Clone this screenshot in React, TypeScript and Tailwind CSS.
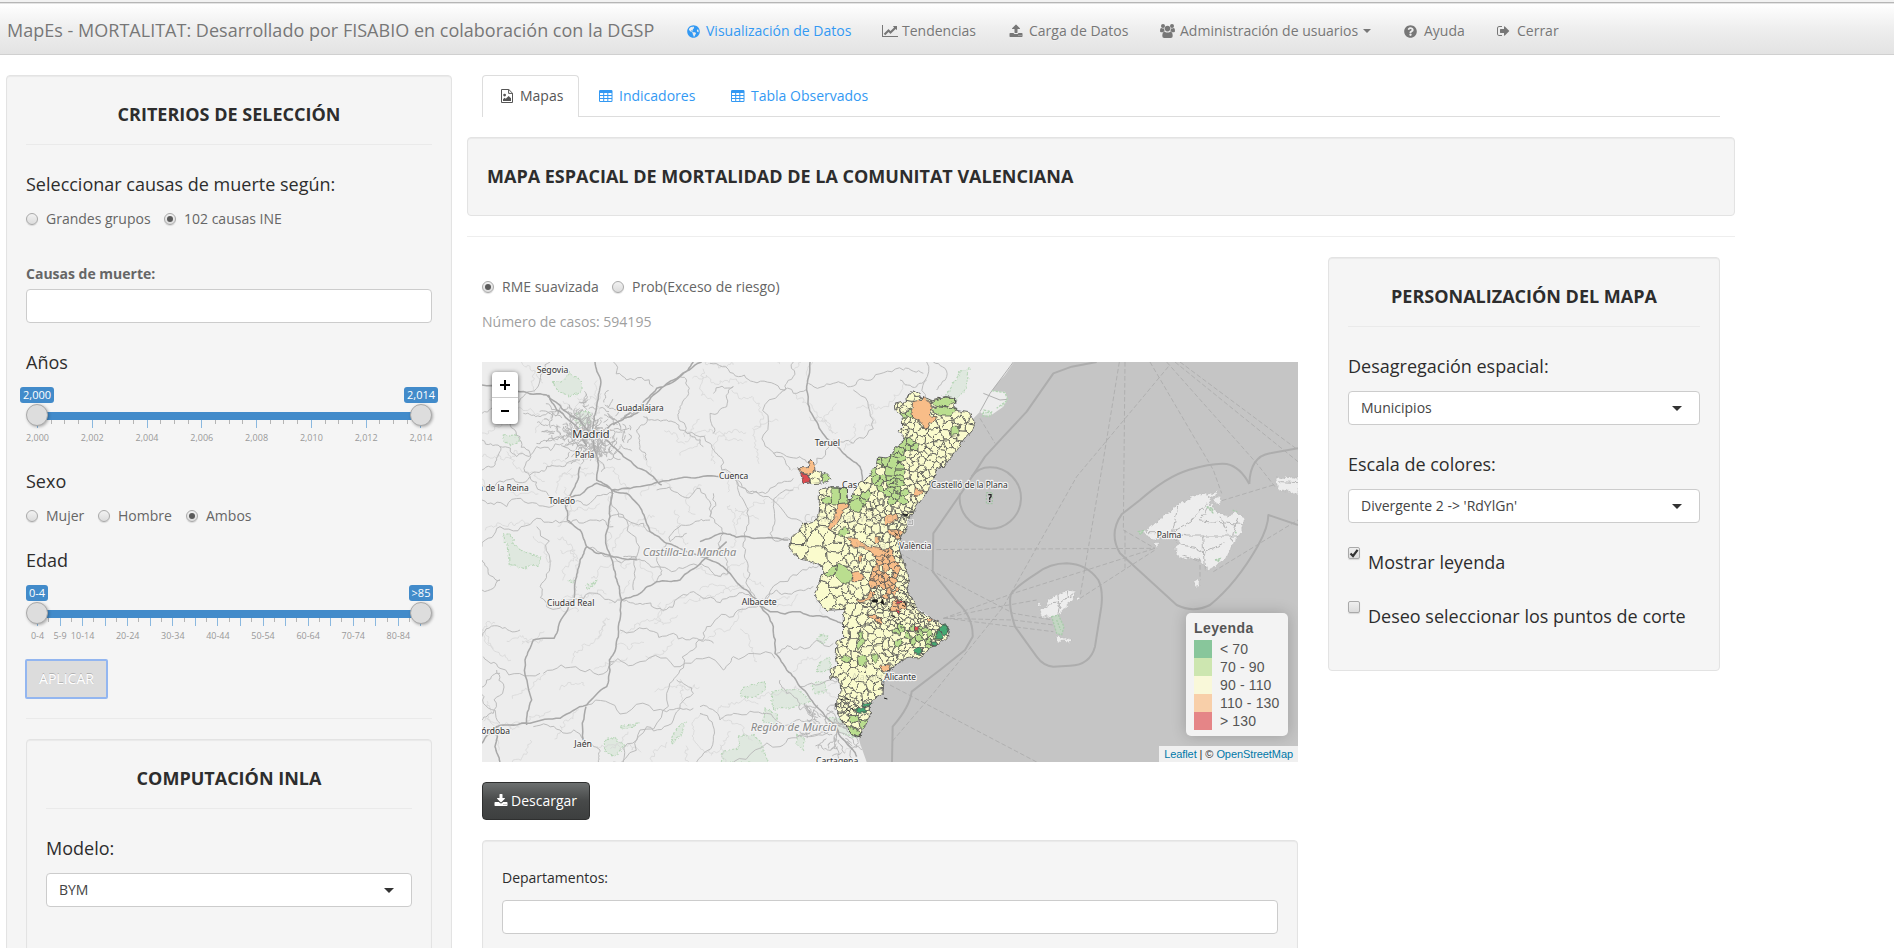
import React from "react";
import { FaGlobeAmericas, FaQuestionCircle } from "react-icons/fa";

/* ---------- icons ---------- */

const DOTS_LOW = "M1344 1472q0-26-19-45t-45-19-45 19-19 45 19 45 45 19 45-19 19-45zm256 0q0-26-19-45t-45-19-45 19-19 45 19 45 45 19 45-19 19-45z";

function LineChartIcon() {
  return (
    <svg viewBox="0 0 2048 1792" className="h-[14px] w-4" fill="currentColor">
      <path d="M2048 1536v128h-2048v-1536h128v1408h1920zm-128-1248v435q0 21-19.5 29.5t-35.5-7.5l-121-121-633 633q-10 10-23 10t-23-10l-233-233-416 416-192-192 585-585q10-10 23-10t23 10l233 233 464-464-121-121q-16-16-7.5-35.5t29.5-19.5h435q14 0 23 9t9 23z" />
    </svg>
  );
}

function UploadIcon() {
  return (
    <svg viewBox="0 0 1792 1792" className="size-[14px]" fill="currentColor" fillRule="evenodd">
      <path d={DOTS_LOW + "M1728 1248v320q0 40-28 68t-68 28h-1472q-40 0-68-28t-28-68v-320q0-40 28-68t68-28h427q21 56 70.5 92t110.5 36h256q61 0 110.5-36t70.5-92h427q40 0 68 28t28 68zm-325-648q-17 40-59 40h-256v448q0 26-19 45t-45 19h-256q-26 0-45-19t-19-45v-448h-256q-42 0-59-40-17-39 14-69l448-448q18-19 45-19t45 19l448 448q31 30 14 69z"} />
    </svg>
  );
}

function DownloadIcon() {
  return (
    <svg viewBox="0 0 1792 1792" className="size-[14px]" fill="currentColor" fillRule="evenodd">
      <path d="M1344 1344q0-26-19-45t-45-19-45 19-19 45 19 45 45 19 45-19 19-45zm256 0q0-26-19-45t-45-19-45 19-19 45 19 45 45 19 45-19 19-45zm128-224v320q0 40-28 68t-68 28h-1472q-40 0-68-28t-28-68v-320q0-40 28-68t68-28h465l135 136q58 56 136 56t136-56l136-136h464q40 0 68 28t28 68zm-325-569q17 41-14 70l-448 448q-18 19-45 19t-45-19l-448-448q-31-29-14-70 17-39 59-39h256v-448q0-26 19-45t45-19h256q26 0 45 19t19 45v448h256q42 0 59 39z" />
    </svg>
  );
}

function SignOutIcon() {
  return (
    <svg viewBox="0 0 1792 1792" className="size-[14px]" fill="currentColor">
      <path d="M640 1440q0 4 1 20t.5 26.5-3 23.5-10 19.5-20.5 6.5h-320q-119 0-203.5-84.5t-84.5-203.5v-704q0-119 84.5-203.5t203.5-84.5h320q13 0 22.5 9.5t9.5 22.5q0 4 1 20t.5 26.5-3 23.5-10 19.5-20.5 6.5h-320q-66 0-113 47t-47 113v704q0 66 47 113t113 47h312l11.5 1 11.5 3 8 5.5 7 9 2 13.5zm928-544q0 26-19 45l-544 544q-19 19-45 19t-45-19-19-45v-288h-448q-26 0-45-19t-19-45v-384q0-26 19-45t45-19h448v-288q0-26 19-45t45-19 45 19l544 544q19 19 19 45z" />
    </svg>
  );
}

function TableIcon() {
  return (
    <svg viewBox="0 0 14 14" className="size-[14px]" fill="currentColor" fillRule="evenodd">
      <path d="M1.2 1H12.3Q13.5 1 13.5 2.2V11.8Q13.5 13 12.3 13H1.2Q0 13 0 11.8V2.2Q0 1 1.2 1ZM1 4H4.2V6H1ZM5.2 4H8.3V6H5.2ZM9.3 4H12.5V6H9.3ZM1 7H4.2V9H1ZM5.2 7H8.3V9H5.2ZM9.3 7H12.5V9H9.3ZM1 10H4.2V12H1ZM5.2 10H8.3V12H5.2ZM9.3 10H12.5V12H9.3Z" />
    </svg>
  );
}

function FileImageIcon() {
  return (
    <svg viewBox="0 0 12 14" className="h-[14px] w-3">
      <path d="M.5.5H7.8L11.5 4.2V13.5H.5ZM7.6.5V4.4H11.5" fill="none" stroke="currentColor" />
      <circle cx="3.6" cy="6.1" r="1.4" fill="currentColor" />
      <path d="M2 12V10.2L3.6 8.7L4.8 9.8L7.6 6.9L10 9.3V12Z" fill="currentColor" />
    </svg>
  );
}

function UsersIcon() {
  return (
    <svg viewBox="0 0 15 14" className="h-[14px] w-[15px]" fill="currentColor">
      <circle cx="3" cy="2" r="2" />
      <circle cx="12" cy="2" r="2" />
      <path d="M4.1 4.4Q3.9 6.4 5 7.3Q3.7 7.4 3 8.2H1.2Q0 8.2 0 7Q0 4.1 1.1 4.1Q2.4 4.9 4.1 4.4ZM10.9 4.4Q11.1 6.4 10 7.3Q11.3 7.4 12 8.2H13.8Q15 8.2 15 7Q15 4.1 13.9 4.1Q12.6 4.9 10.9 4.4Z" />
      <circle cx="7.5" cy="4.6" r="2.8" />
      <path d="M4.7 7.7Q7.5 9.5 10.3 7.7Q12.7 7.8 12.7 12Q12.7 13.9 10.8 13.9H4.2Q2.3 13.9 2.3 12Q2.3 7.8 4.7 7.7Z" />
    </svg>
  );
}

/* ---------- form parts ---------- */

function Radio({ label, checked, className }: { label: string; checked?: boolean; className: string }) {
  return (
    <label className={"flex h-5 items-center text-sm leading-5 text-[#666] " + className}>
      <span className="mr-2 flex size-3 shrink-0 items-center justify-center rounded-full border border-[#a9a9a9] bg-linear-to-b from-[#f2f2f2] to-[#dcdcdc] shadow-[0_1px_1px_rgba(0,0,0,0.12)]">
        {checked && <span className="size-1.5 rounded-full bg-[#5a5a5a]" />}
      </span>
      <span className="whitespace-nowrap">{label}</span>
    </label>
  );
}

function Check({ label, checked }: { label: string; checked?: boolean }) {
  return (
    <label className="flex items-start">
      <span className="mr-2 flex size-3 shrink-0 items-center justify-center rounded-[2px] border border-[#a9a9a9] bg-linear-to-b from-[#efefef] to-[#dcdcdc] shadow-[0_1px_1px_rgba(0,0,0,0.12)]">
        {checked && (
          <svg viewBox="0 0 10 10" className="size-[10px]" fill="none" stroke="#333" strokeWidth="2.2">
            <path d="M1.5 5.5L4 8L8.6 1.8" />
          </svg>
        )}
      </span>
      <span className="mt-[5px] text-lg leading-5 whitespace-nowrap text-[#2d2d2d]">{label}</span>
    </label>
  );
}

function Select({ value, className }: { value: string; className: string }) {
  return (
    <div className={"flex h-[34px] items-center justify-between rounded border border-[#ccc] bg-white pr-[17px] pl-3 text-sm text-[#444] " + className}>
      <span>{value}</span>
      <span className="border-x-[5px] border-t-[5px] border-x-transparent border-t-[#333]" />
    </div>
  );
}

function Title({ children, className = "" }: { children: React.ReactNode; className?: string }) {
  return <h4 className={"text-lg leading-5 font-bold whitespace-nowrap text-[#2d2d2d] " + className}>{children}</h4>;
}

function Caption({ children, className }: { children: React.ReactNode; className: string }) {
  return <h4 className={"text-lg leading-5 whitespace-nowrap text-[#2d2d2d] " + className}>{children}</h4>;
}

const WELL = "rounded border border-[#e3e3e3] bg-[#f5f5f5] shadow-[inset_0_1px_1px_rgba(0,0,0,0.05)] ";

type Tick = { x: number; big: boolean; label?: string };

function RangeSlider({ from, to, ticks, className }: { from: string; to: string; ticks: Tick[]; className: string }) {
  return (
    <div className={"relative h-[57px] w-[406px] " + className}>
      <svg className="absolute inset-0 overflow-visible" width="406" height="57" viewBox="0 0 406 57">
        {ticks.map((t, i) => (
          <g key={i}>
            <rect x={Math.round(t.x)} y="33" width="1" height={t.big ? 8 : 4} fill={t.big ? "#8ab8df" : "#b5b5b5"} />
            {t.label && (
              <text x={t.x + 0.5} y="54" textAnchor="middle" fontSize="9" fill="#999" className="font-['Open_Sans',sans-serif]">
                {t.label}
              </text>
            )}
          </g>
        ))}
        <rect x="11" y="25" width="384" height="8" fill="#428bca" />
      </svg>
      <div className="absolute inset-x-0 top-0 flex justify-between text-[11px] leading-4 whitespace-nowrap text-white">
        <div className="flex w-[22px] justify-center"><span className="shrink-0 rounded-[3px] bg-[#428bca] px-[3px]">{from}</span></div>
        <div className="flex w-[22px] justify-center"><span className="shrink-0 rounded-[3px] bg-[#428bca] px-[3px]">{to}</span></div>
      </div>
      <div className="absolute inset-x-0 top-[17px] flex justify-between">
        <span className="size-[22px] rounded-full border border-[#aaa] bg-[#ddd] shadow-[1px_1px_3px_rgba(0,0,0,0.3)]" />
        <span className="size-[22px] rounded-full border border-[#aaa] bg-[#ddd] shadow-[1px_1px_3px_rgba(0,0,0,0.3)]" />
      </div>
    </div>
  );
}

const YEAR_TICKS: Tick[] = Array.from({ length: 29 }, (_, i) => ({
  x: 11 + (i * 383.4) / 28,
  big: i % 4 === 0,
  label: i % 4 === 0 ? `2,0${String((i / 4) * 2).padStart(2, "0")}` : undefined,
}));

const AGE_LABELS: Record<number, string> = {
  0: "0-4", 1: "5-9", 2: "10-14", 4: "20-24", 6: "30-34", 8: "40-44", 10: "50-54", 12: "60-64", 14: "70-74", 16: "80-84",
};
const AGE_TICKS: Tick[] = Array.from({ length: 35 }, (_, i) => ({
  x: 11 + (i * 383.4) / 34,
  big: i % 2 === 0,
  label: i % 2 === 0 ? AGE_LABELS[i / 2] : undefined,
}));

/* ---------- map ---------- */

type Pt = [number, number];

function makeRandom(seed: number) {
  let s = seed;
  return () => {
    s = (s * 1664525 + 1013904223) % 4294967296;
    return s / 4294967296;
  };
}

const pts = (s: string): Pt[] => s.trim().split(/\s+/).map((p) => p.split(",").map(Number) as Pt);
const toD = (p: Pt[]) => "M" + p.map(([x, y]) => `${x.toFixed(1)} ${y.toFixed(1)}`).join("L");

/* Subdivides a line and displaces its midpoints so that it winds like a road. */
function winding(line: Pt[], rnd: () => number, amount = 0.16): Pt[] {
  let cur = line;
  for (let pass = 0; pass < 3; pass++) {
    const next: Pt[] = [cur[0]];
    for (let i = 1; i < cur.length; i++) {
      const [ax, ay] = cur[i - 1];
      const [bx, by] = cur[i];
      const k = (rnd() - 0.5) * amount;
      if (Math.hypot(bx - ax, by - ay) > 9) next.push([(ax + bx) / 2 - (by - ay) * k, (ay + by) / 2 + (bx - ax) * k]);
      next.push([bx, by]);
    }
    cur = next;
  }
  return cur;
}

const MAJOR = [
  "6,75 120,95 200,105 250,150 300,180 330,220",
  "400,195 470,160 520,105 590,55 665,6",
  "380,205 430,178 480,140 530,85 600,50 640,6",
  "345,6 362,60 355,110 342,170 335,220",
  "340,240 350,360 395,390 470,380 560,362 620,352 720,350",
  "380,240 430,290 520,350 545,375",
  "395,390 440,400 485,450 510,515 560,550 620,575 690,600 750,640 800,690 838,725",
  "660,545 730,520 770,532 830,535 925,540",
  "395,390 390,470 380,560 400,620 418,680 425,720 415,800 408,860 388,900 390,930 380,980 320,1035 240,1075 150,1090 50,1100",
  "245,420 300,405 350,370 390,385",
  "300,320 285,380 250,430",
  "255,430 262,480 300,510 320,560 350,580 400,590 470,600",
  "320,560 300,600 290,650 282,720 235,800 222,835 160,840 135,900 155,1020 140,1095",
  "425,720 480,700 530,665 600,660 665,605 740,545",
  "838,735 880,800 885,880 920,930 960,980 1010,1040 1060,1090 1100,1150 1130,1190",
  "842,738 870,755 960,755 1040,770 1085,790",
  "990,6 980,90 1000,170 1040,235 1090,280 1140,320 1150,370",
  "6,1150 50,1100 45,1160 60,1206",
  "310,1140 318,1040",
  "205,105 230,150 300,210 320,260",
];

const MINOR = [
  "980,88 900,88 820,65 760,40 690,10",
  "985,70 1060,70 1120,78 1180,55 1270,30 1330,40",
  "6,375 80,360 150,350 150,280 120,230 90,190",
  "150,350 180,390 220,410",
  "150,345 200,320 260,310 300,300",
  "760,350 800,390 870,385 940,355",
  "760,350 720,290 690,250 600,210 560,180 490,170",
  "765,360 790,420 800,500 795,580 810,640 825,710",
  "700,400 690,470 730,520 740,600 745,640",
  "530,390 600,405 660,385 690,470",
  "620,520 570,545 640,490 690,480",
  "600,50 628,85 600,140 605,185 640,230 670,260",
  "500,170 470,210 480,260 500,300",
  "430,590 470,600 530,620 620,620 700,640 745,640",
  "320,560 380,590 470,590 460,690",
  "350,700 425,720 480,730 540,745 600,710 680,715 760,710 830,720",
  "200,740 270,720 350,700",
  "838,725 900,665 980,630 1020,615",
  "850,720 890,690 960,690 1000,680",
  "838,735 760,770 680,800 640,870 600,930 560,1000 480,1110 430,1206",
  "885,895 760,890 730,930 600,920 480,905 390,905",
  "320,1035 420,1062 560,1055 640,1045",
  "660,1040 720,1080 760,1060 860,1060 950,1080 1010,1080",
  "590,960 640,1000 580,1080 500,1100 400,1206",
  "310,1140 240,1110 160,1100",
  "310,1140 360,1170 355,1206",
  "60,940 20,960 10,1030 60,1090",
  "6,560 60,500 160,482 250,485 330,480 400,500",
  "6,420 80,440 170,430 240,420",
  "120,810 60,800 6,830",
  "420,810 500,805 580,820 660,840 700,850",
  "180,940 60,925 10,890",
  "190,940 300,930 400,910",
  "6,690 60,660 20,620 6,600",
  "200,740 180,680 210,600 170,500",
  "940,6 920,70 900,100 850,225 900,290 930,330",
  "700,100 760,80 740,140 690,160 700,220",
  "1040,235 1000,320 960,290 880,280",
  "1060,240 1120,250 1180,180 1120,90",
  "930,540 870,520 880,440 940,390",
  "770,360 850,410 900,440 980,500",
  "1090,1000 1040,1050 1080,1100 1120,1110",
  "1010,1040 960,1050 920,1000 900,960",
  "1060,1090 980,1130 900,1160 760,1206",
  "1070,1100 1120,1140 1180,1170",
  "960,980 1050,960 1080,960",
  "890,880 960,860 1060,850",
  "650,1206 700,1130 660,1060",
  "6,1080 40,1060 70,990 50,930",
  "6,160 60,130 130,110 180,60 210,6",
  "130,160 180,170 250,160",
  "60,260 110,290 170,260 250,250",
  "6,240 60,260 50,300 6,330",
  "400,6 440,60 520,80",
  "560,550 540,620 530,665",
  "390,470 460,490 510,515",
  "470,590 440,480 400,400",
  "400,400 330,430 260,440",
  "1340,6 1335,120 1290,150",
  "1370,90 1400,50 1360,6",
  "1260,60 1310,80 1340,60",
];

function buildBackRoads() {
  const rnd = makeRandom(77);
  const out: string[] = [];
  for (let i = 0; i < 110; i++) {
    let x = 10 + rnd() * 1180;
    let y = 10 + rnd() * 1190;
    let a = rnd() * 6.28;
    const line: Pt[] = [[x, y]];
    const n = 3 + Math.floor(rnd() * 5);
    for (let k = 0; k < n; k++) {
      a += (rnd() - 0.5) * 1.3;
      x += Math.cos(a) * 28;
      y += Math.sin(a) * 22;
      line.push([x, y]);
    }
    out.push(toD(winding(line, rnd, 0.9)));
  }
  return out.join("");
}

/* Dense street webs round the larger cities. */
function buildCityWeb(cx: number, cy: number, rx: number, ry: number, n: number, seed: number) {
  const rnd = makeRandom(seed);
  const out: string[] = [];
  for (let i = 0; i < n; i++) {
    const a = rnd() * 6.28;
    const r = Math.pow(rnd(), 0.8);
    const x = cx + Math.cos(a) * rx * r;
    const y = cy + Math.sin(a) * ry * r;
    const b = rnd() < 0.5 ? a : a + 1.57;
    const l = 14 + rnd() * 38;
    out.push(toD(winding([[x, y], [x + Math.cos(b) * l, y + Math.sin(b) * l]], rnd, 0.6)));
  }
  return out.join("");
}

const roadRandom = makeRandom(5);
const MAJOR_D = MAJOR.map((s) => toD(winding(pts(s), roadRandom))).join("");
const MINOR_D = MINOR.map((s) => toD(winding(pts(s), roadRandom, 0.5))).join("");
const BACK_D = buildBackRoads();
const MADRID_D = buildCityWeb(325, 210, 130, 90, 130, 9) + buildCityWeb(325, 245, 50, 40, 70, 14);
const MURCIA_D = buildCityWeb(1060, 1110, 90, 90, 60, 21);

const OUTLINE = pts(
  "428,57 445,68 447,78 465,82 478,88 500,82 525,77 550,80 552,92 545,105 556,118 575,122 595,125 612,150 600,180 578,205 560,232 545,250 530,268 520,285 500,290 490,315 478,330 472,358 450,388 435,410 420,430 410,462 400,485 385,515 385,540 395,570 408,605 412,630 405,655 425,685 437,710 460,730 485,745 520,760 538,785 520,805 500,820 480,825 460,850 440,860 420,860 400,865 370,885 345,905 335,935 333,972 305,985 298,1000 298,1030 285,1060 270,1075 267,1097 245,1090 225,1065 205,1040 193,1010 195,985 210,960 205,920 180,922 177,895 200,880 195,855 198,815 218,800 217,735 222,715 165,718 130,675 140,640 155,610 155,585 105,567 90,565 62,542 57,528 62,498 85,475 100,458 130,450 140,435 145,390 145,355 180,347 225,350 230,390 244,382 247,360 262,343 285,325 303,300 315,285 320,255 345,258 368,245 370,230 400,207 395,195 380,180 395,170 393,130 372,118 370,100 390,95 410,97 408,80 415,65",
);

function inside([x, y]: Pt, poly: Pt[]) {
  let hit = false;
  for (let i = 0, j = poly.length - 1; i < poly.length; j = i++) {
    const [xi, yi] = poly[i];
    const [xj, yj] = poly[j];
    if (yi > y !== yj > y && x < ((xj - xi) * (y - yi)) / (yj - yi) + xi) hit = !hit;
  }
  return hit;
}

function spacing(x: number, y: number) {
  if (x < 200 && y > 490 && y < 710) return 58;
  if (Math.hypot(x - 320, y - 695) < 35) return 8;
  if (x > 365 && y > 400 && y < 560) return 9;
  if (x > 330 && y >= 640 && y < 770) return 10;
  if (x > 300 && y >= 540 && y < 770) return 13;
  if (x > 345 && y >= 770) return 14;
  if (y > 975 && y < 1030 && x > 200) return 11;
  if (y < 330 && x > 430) return 20;
  if (x > 300 && y < 460) return 16;
  return 25;
}

const YELLOW = "#fafbcd";
const GREEN = "#bade8f";
const ORANGE = "#f8bd88";
const DARK = "#45a872";
const RED = "#dc4b50";

const ZONES: [number, number, number, number, string, number][] = [
  [345, 560, 30, 25, ORANGE, 0.9],
  [345, 615, 38, 40, ORANGE, 0.85],
  [335, 660, 52, 26, ORANGE, 0.65],
  [378, 700, 26, 25, ORANGE, 0.7],
  [325, 740, 30, 14, ORANGE, 0.6],
  [380, 492, 12, 14, ORANGE, 0.6],
  [405, 655, 20, 12, ORANGE, 0.3],
  [475, 745, 14, 8, ORANGE, 0.6],
  [350, 300, 54, 68, GREEN, 0.85],
  [405, 232, 42, 28, GREEN, 0.9],
  [378, 380, 40, 20, GREEN, 0.65],
  [272, 385, 22, 22, GREEN, 0.75],
  [400, 795, 50, 45, GREEN, 0.45],
  [470, 800, 40, 35, GREEN, 0.4],
  [408, 140, 20, 40, GREEN, 0.6],
  [270, 1045, 30, 30, GREEN, 0.4],
  [490, 315, 10, 12, GREEN, 0.9],
];

/* Splits the region into Voronoi cells by clipping a box against the bisectors. */
function buildCells() {
  const rnd = makeRandom(2014);
  const seeds: Pt[] = [];
  for (let i = 0; i < 7000; i++) {
    const p: Pt = [50 + rnd() * 570, 50 + rnd() * 1050];
    if (!inside(p, OUTLINE)) continue;
    const r = spacing(p[0], p[1]) * (0.62 + rnd() * 0.6);
    if (seeds.every((q) => Math.hypot(p[0] - q[0], p[1] - q[1]) > r)) seeds.push(p);
  }
  return seeds.map((s) => {
    let cell: Pt[] = [[s[0] - 90, s[1] - 90], [s[0] + 90, s[1] - 90], [s[0] + 90, s[1] + 90], [s[0] - 90, s[1] + 90]];
    for (const q of seeds) {
      if (q === s || Math.hypot(q[0] - s[0], q[1] - s[1]) > 180) continue;
      const nx = q[0] - s[0];
      const ny = q[1] - s[1];
      const c = (q[0] * q[0] + q[1] * q[1] - s[0] * s[0] - s[1] * s[1]) / 2;
      const next: Pt[] = [];
      for (let i = 0; i < cell.length; i++) {
        const a = cell[i];
        const b = cell[(i + 1) % cell.length];
        const da = a[0] * nx + a[1] * ny - c;
        const db = b[0] * nx + b[1] * ny - c;
        if (da <= 0) next.push(a);
        if (da < 0 !== db < 0) {
          const t = da / (da - db);
          next.push([a[0] + (b[0] - a[0]) * t, a[1] + (b[1] - a[1]) * t]);
        }
      }
      cell = next;
    }
    let fill = YELLOW;
    for (const [zx, zy, zrx, zry, color, chance] of ZONES) {
      if (((s[0] - zx) / zrx) ** 2 + ((s[1] - zy) / zry) ** 2 < 1 && rnd() < chance) {
        fill = color;
        break;
      }
    }
    return { d: toD(cell) + "Z", fill };
  });
}

const CELLS = buildCells();

const FEATURES: [string, string][] = [
  [ORANGE, "425,95 448,90 455,76 462,85 480,95 480,120 478,135 495,137 495,148 475,155 462,178 452,150 425,140 422,120"],
  [ORANGE, "200,398 232,395 228,412 210,425 205,445 183,475 168,470 188,440"],
  [ORANGE, "228,500 258,502 285,525 320,532 345,540 335,555 315,555 280,532 250,528"],
  [ORANGE, "310,497 328,497 328,518 310,518"],
  [ORANGE, "240,605 262,600 278,618 268,632 243,632"],
  [ORANGE, "430,350 455,360 440,378 427,375"],
  [ORANGE, "340,440 375,425 382,440 365,450 340,465"],
  [ORANGE, "325,882 358,885 350,903 338,898"],
  [ORANGE, "262,552 272,550 270,575 263,570"],
  [ORANGE, "255,686 290,680 300,655 304,680 285,690 262,692"],
  [GREEN, "155,612 185,585 197,580 192,612 180,618"],
  [GREEN, "192,612 197,580 205,577 225,590 245,610 235,635 215,637"],
  [GREEN, "180,348 205,348 205,400 180,398"],
  [GREEN, "205,348 226,352 228,395 205,398"],
  [GREEN, "155,385 180,375 182,398 155,395"],
  [GREEN, "232,392 262,385 280,400 268,428 235,412"],
  [GREEN, "537,168 562,165 565,190 537,193"],
  [GREEN, "203,478 218,468 235,482 222,495 205,492"],
  [GREEN, "480,92 520,78 550,82 552,95 530,105 515,108 490,102"],
  [GREEN, "478,115 500,105 530,108 555,112 540,132 510,132"],
  [GREEN, "255,822 275,800 283,810 262,840"],
  [GREEN, "262,790 272,784 275,800 262,806"],
  [GREEN, "205,862 220,850 240,862 222,875"],
  [GREEN, "258,855 280,850 293,868 270,888 262,880"],
  [GREEN, "300,850 322,845 325,862 312,875"],
  [GREEN, "222,1060 245,1072 270,1085 267,1097 245,1090"],
  [DARK, "505,765 525,760 538,782 520,792 505,780"],
  [DARK, "495,785 515,785 512,805 498,803"],
  [DARK, "480,810 498,810 495,822 485,822"],
  [DARK, "428,838 445,825 457,845 440,850"],
  [DARK, "275,997 297,993 298,1003 280,1008"],
  [DARK, "255,1010 285,1010 285,1022 255,1025"],
  [RED, "372,690 390,686 396,694 380,696"],
  [RED, "430,770 445,766 445,778 432,780"],
  [RED, "376,718 390,718 388,725 376,724"],
  [ORANGE, "77,290 105,290 112,285 118,265 128,275 133,300 110,310 90,305"],
  [YELLOW, "112,310 130,297 155,302 150,335 120,337"],
  [YELLOW, "117,325 130,318 145,322 148,336 120,338"],
  [GREEN, "155,310 165,304 180,322 157,337 152,322"],
  [RED, "88,307 110,311 117,333 98,335"],
];

const SEA =
  "1602,6 1575,45 1552,70 1535,92 1545,100 1575,95 1583,118 1570,140 1530,168 1510,165 1500,155 1478,178 1430,235 1375,310 1325,400 1265,490 1240,560 1255,620 1268,680 1300,735 1375,790 1370,840 1290,880 1218,925 1205,962 1200,1000 1165,1020 1155,1060 1130,1110 1140,1150 1160,1206 2454,1206 2454,6";

const PARKS = [
  "215,65 240,60 265,35 300,60 300,95 265,105 230,90",
  "285,155 325,155 330,180 300,195 282,178",
  "70,225 105,218 115,240 90,252 68,240",
  "65,522 85,518 100,535 98,550 130,572 180,590 172,612 125,622 85,610 78,550 68,540",
  "785,980 850,962 850,985 820,1010 780,1005",
  "870,990 950,985 990,1020 930,1040 875,1045",
  "850,1040 890,1060 880,1090 845,1080",
  "990,970 1030,960 1035,990 1000,1000",
  "1015,820 1040,825 1030,850 1010,840",
  "1020,900 1050,890 1045,925 1010,935",
  "775,1125 820,1118 840,1150 860,1206 720,1206 730,1170 775,1160",
  "370,1140 400,1128 430,1155 400,1185 370,1170",
  "570,1140 590,1100 612,1085 600,1125 575,1145",
  "1410,80 1440,30 1465,20 1455,80 1420,120 1395,105",
  "1540,90 1580,98 1582,120 1560,135 1545,120",
  "1505,155 1535,155 1528,170 1508,170",
  "1040,1070 1100,1080 1130,1130 1060,1110",
  "950,1120 970,1130 965,1165 945,1150",
  "265,660 282,655 280,668 265,665",
  "315,680 345,658 335,675 318,688",
  "420,1095 475,1085 440,1102 418,1100",
];

const ISLANDS = [
  "755,515 800,480 850,440 900,408 945,393 960,420 975,455 1010,465 1035,450 1058,470 1050,515 1025,550 1005,590 950,630 925,595 865,590 850,560 870,545 840,515 790,535",
  "950,400 985,390 975,405 955,408",
  "965,415 990,408 985,430 970,425",
  "1155,350 1224,348 1224,402 1190,390 1160,385",
  "470,715 500,700 525,688 550,690 545,720 500,765 450,768 448,745 465,740",
  "490,770 505,768 500,780 490,778",
  "495,822 520,832 545,835 535,845 515,836 500,845",
  "908,660 925,655 928,672 912,678",
  "790,545 805,545 798,562",
  "442,722 452,728 445,738",
  "555,708 570,712 558,718",
];

const FERRIES = [
  "705,6 700,510 795,565",
  "688,6 640,300 570,710",
  "780,6 970,330 995,400",
  "830,6 1100,310 1155,380",
  "855,6 1224,305",
  "870,6 1224,270",
  "835,20 560,350 340,740 130,1000 6,1145",
  "30,580 140,640 370,760 490,780",
  "55,570 200,568 795,565",
  "160,775 370,700 795,565",
  "160,775 300,745 440,720",
  "160,775 370,780 490,795",
  "170,775 490,815",
  "0,975 440,1206",
  "570,715 795,570",
  "1150,375 985,425",
  "705,625 705,510",
  "970,635 1224,480",
  "270,175 315,250",
  "930,615 930,660",
];

const SEA_BORDERS = [
  "M620 6L545 20L490 40L410 155L340 230L285 290L220 390L130 520L128 635L200 725Q250 770 248 830L225 870L150 930L65 995Q60 1040 8 1100L6 1206",
  "M245 350Q265 322 300 322A92 92 0 1 1 210 400",
  "M530 610Q590 612 625 660Q640 690 634 740L615 860Q600 915 540 917L490 920Q460 918 440 890L375 800Q355 740 362 705Q370 685 440 640Q480 610 530 610Z",
  "M1078 372Q1050 320 1010 312Q970 308 895 330Q830 350 750 420L695 463Q655 520 690 580L860 735Q910 760 960 735Q1040 670 1105 555Q1135 500 1135 465L1224 495",
  "M1078 372Q1080 290 1140 280L1224 265",
];

const ISLAND_ROADS =
  "M765 515L840 515L900 480L950 425M840 515L890 525L1045 525M840 515L860 550L915 560L940 575M860 440L845 510M925 480L1050 490M940 575L1000 545M935 520L940 625M870 580L930 600M960 420L940 460L925 480M990 470L1010 520M1040 470L1020 540M470 730L510 725L545 700M510 725L500 760M500 700L505 740M530 690L525 720M1165 362L1224 365";

type Label = { t: string; x: number; y: number; w: number; size?: number };
const LABELS: Label[] = [
  { t: "Segovia", x: 170, y: 39, w: 95 },
  { t: "Guadalajara", x: 409, y: 153, w: 142 },
  { t: "Madrid", x: 277, y: 233, w: 112, size: 34 },
  { t: "Parla", x: 285, y: 295, w: 58 },
  { t: "Cuenca", x: 717, y: 357, w: 88 },
  { t: "n de la Reina", x: -6, y: 394, w: 152 },
  { t: "Toledo", x: 206, y: 431, w: 79 },
  { t: "Ciudad Real", x: 201, y: 739, w: 142 },
  { t: "Albacete", x: 785, y: 736, w: 105 },
  { t: "Teruel", x: 1004, y: 257, w: 76 },
  { t: "Córdoba", x: -12, y: 1122, w: 102 },
  { t: "Jaén", x: 283, y: 1162, w: 53 },
  { t: "Cartagena", x: 1008, y: 1212, w: 127 },
  { t: "Castelló de la Plana", x: 1353, y: 385, w: 230 },
  { t: "Palma", x: 2030, y: 533, w: 74 },
];

function SpainMap() {
  return (
    <svg viewBox="6 6 2448 1200" className="block h-[400px] w-[816px] font-['Noto_Sans','Open_Sans',sans-serif]">
      <defs>
        <clipPath id="region">
          <polygon points={OUTLINE.map((p) => p.join(",")).join(" ")} />
        </clipPath>
        <filter id="irregular" x="-2%" y="-2%" width="104%" height="104%" colorInterpolationFilters="sRGB">
          <feTurbulence type="turbulence" baseFrequency="0.035" numOctaves="2" seed="4" result="noise" />
          <feDisplacementMap in="SourceGraphic" in2="noise" scale="13" xChannelSelector="R" yChannelSelector="G" />
        </filter>
      </defs>
      <rect x="6" y="6" width="2448" height="1200" fill="#ededed" />
      <g filter="url(#irregular)">
        {PARKS.map((p) => (
          <polygon key={p} points={p} fill="#dfe8df" stroke="#b8d6b8" strokeWidth="3.4" strokeDasharray="7 4" />
        ))}
      </g>
      <g fill="none" strokeLinejoin="round">
        <path d={BACK_D} stroke="#d6d6d6" strokeWidth="2.2" />
        <path d={MINOR_D} stroke="#bcbcbc" strokeWidth="3" />
        <path d={MADRID_D + MURCIA_D} stroke="#b3b3b3" strokeWidth="2.6" />
        <path d={MAJOR_D} stroke="#a8a8a8" strokeWidth="4.6" />
      </g>
      <polygon points={SEA} fill="#c5c5c5" />
      <polygon points="1500,158 1535,92 1575,96 1583,118 1562,138 1530,150 1512,140" fill="#ededed" />
      <path d="M1500 155L1530 100L1560 60L1600 6M1510 100L1560 120L1582 118" fill="none" stroke="#b0b0b0" strokeWidth="3" />
      <path d="M1512 150L1535 156L1528 170L1508 168ZM1536 92L1575 98L1583 120L1550 145" fill="none" stroke="#b4d4b4" strokeWidth="4" strokeDasharray="7 4" />

      <g transform="translate(1230 0)">
        {FERRIES.map((f) => (
          <polyline key={f} points={f} fill="none" stroke="#a9a9a9" strokeWidth="2.4" strokeDasharray="14 7" />
        ))}
        {SEA_BORDERS.map((b) => (
          <path key={b} d={b} fill="none" stroke="#adadad" strokeWidth="6" strokeLinejoin="round" />
        ))}
        <g filter="url(#irregular)">
          {ISLANDS.map((p) => (
            <polygon key={p} points={p} fill="#ededed" stroke="#b5b5b5" strokeWidth="2" strokeDasharray="6 4" />
          ))}
          <path d={ISLAND_ROADS} fill="none" stroke="#b6b6b6" strokeWidth="3" />
        </g>
        <path d="M745 515L760 512L752 524ZM950 440L968 445L968 458ZM1028 450L1042 456M1036 515L1040 522M975 600L990 596L984 606M485 770L505 765L522 800L515 825L500 820ZM500 780L512 810" fill="#c3d6c3" stroke="#a9cbab" strokeWidth="4" strokeDasharray="6 4" />
        <rect x="289" y="398" width="18" height="33" fill="none" stroke="#9dc5a0" strokeWidth="3" strokeDasharray="6 4" />
        <path d="M295 404h8v6l-4 4v5M297 424h4" fill="none" stroke="#222" strokeWidth="4" />
      </g>

      <g fill="#333" stroke="#f4f4f4" strokeWidth="7" strokeLinejoin="round">
        <text x="1086" y="385" fontSize="27" paintOrder="stroke">Cas</text>
      </g>

      <g transform="translate(870 30)" stroke="#4f4f4f" strokeWidth="2.3" strokeLinejoin="round">
        <g filter="url(#irregular)">
          <g clipPath="url(#region)">
            {CELLS.map((c, i) => (
              <path key={i} d={c.d} fill={c.fill} />
            ))}
          </g>
          {FEATURES.map(([fill, p]) => (
            <polygon key={p} points={p} fill={fill} />
          ))}
          <polygon points={OUTLINE.map((p) => p.join(",")).join(" ")} fill="none" strokeWidth="2.6" />
        </g>
        <path
          d="M308 690h14v6h-14zM314 686l6 12M398 432l16 2-6 4zM213 988l10 3M226 986l12 3M342 984l10 3M422 706l10 6M396 705l10 5M374 488l10 8M228 1018l12 6M245 1014l6 8M332 698l6-10 4 18M354 714l10 8M402 692l6 14M362 736l14 6"
          fill="#111"
          stroke="#222"
          strokeWidth="3"
        />
      </g>

      <g fill="#888" opacity="0.3" fontSize="27">
        <text x="972" y="486" fontSize="30" textLength="325">Comunitat Valenciana</text>
        <text x="1128" y="566" textLength="90">Valencia</text>
        <text x="1115" y="960" textLength="95">Alacant</text>
      </g>

      <g paintOrder="stroke" stroke="#f4f4f4" strokeWidth="7" strokeLinejoin="round" fill="#333">
        {LABELS.map((l) => (
          <text key={l.t} x={l.x} y={l.y} fontSize={l.size ?? 27} textLength={l.w} lengthAdjust="spacingAndGlyphs">
            {l.t}
          </text>
        ))}
        <text x="1258" y="568" fontSize="27" textLength="96" lengthAdjust="spacingAndGlyphs">València</text>
        <text x="1213" y="960" fontSize="27" textLength="95" lengthAdjust="spacingAndGlyphs">Alicante</text>
        <rect x="1284" y="480" width="14" height="14" fill="none" stroke="#fff" strokeWidth="6" />
        <rect x="1284" y="480" width="14" height="14" fill="none" stroke="#777" strokeWidth="2" />
        <g fill="#8a8a8a" fontStyle="italic">
          <text x="488" y="588" fontSize="31" textLength="281" lengthAdjust="spacingAndGlyphs">Castilla-La Mancha</text>
          <text x="812" y="1113" fontSize="31" textLength="258" lengthAdjust="spacingAndGlyphs">Región de Murcia</text>
        </g>
      </g>
    </svg>
  );
}

const LEGEND = [
  { label: "< 70", color: "bg-[#88c69b]" },
  { label: "70 - 90", color: "bg-[#cde6b0]" },
  { label: "90 - 110", color: "bg-[#f9f8d9]" },
  { label: "110 - 130", color: "bg-[#f8cfa9]" },
  { label: "> 130", color: "bg-[#e58587]" },
];

function MapView() {
  return (
    <div className="relative mt-[30px] h-[400px] w-[816px] overflow-hidden font-['Liberation_Sans',Arial,sans-serif]">
      <SpainMap />
      <div className="absolute top-[10px] left-[10px] w-[26px] rounded bg-white shadow-[0_1px_5px_rgba(0,0,0,0.65)]">
        <div className="flex h-[26px] items-center justify-center border-b border-[#ccc]">
          <svg viewBox="0 0 10 10" className="size-[10px]" stroke="#000" strokeWidth="2"><path d="M5 0V10M0 5H10" /></svg>
        </div>
        <div className="flex h-[26px] items-center justify-center">
          <svg viewBox="0 0 10 10" className="size-[10px]" stroke="#000" strokeWidth="2"><path d="M1 5H9" /></svg>
        </div>
      </div>
      <div className="absolute right-[10px] bottom-[26px] w-[102px] rounded-[5px] bg-[#f3f3f3] px-2 pt-[6px] pb-[6px] text-sm leading-[18px] text-[#555] shadow-[0_0_15px_rgba(0,0,0,0.2)]">
        <div className="pb-[3px] font-bold tracking-[0.4px]">Leyenda</div>
        {LEGEND.map((l) => (
          <div key={l.label} className="flex h-[18px] tracking-[0.15px] whitespace-nowrap">
            <span className={"mr-2 h-[18px] w-[18px] shrink-0 " + l.color} />
            <span>{l.label}</span>
          </div>
        ))}
      </div>
      <div className="absolute right-0 bottom-0 bg-[#f0f0f0] px-[5px] text-[11px] leading-4 tracking-[-0.08px] whitespace-nowrap text-[#333]">
        <span className="text-[#0078a8]">Leaflet</span> | © <span className="text-[#0078a8]">OpenStreetMap</span>
      </div>
    </div>
  );
}

/* ---------- page ---------- */

function NavItem({ icon, label, className, caret }: { icon: React.ReactNode; label: string; className: string; caret?: boolean }) {
  return (
    <a className={"flex h-[50px] shrink-0 items-center pt-1 pl-[15px] text-sm whitespace-nowrap " + className}>
      <span className="mr-1 flex shrink-0">{icon}</span>
      {label}
      {caret && <span className="ml-[5px] border-x-4 border-t-4 border-x-transparent border-t-[#777]" />}
    </a>
  );
}

export default function App() {
  return (
    <div className="h-[948px] w-[1894px] overflow-hidden bg-white font-['Open_Sans',sans-serif] text-sm text-[#666]">
      <div className="h-[2px] bg-[#f2f2f2]" />
      <div className="h-px bg-[#b6b6b6]" />
      <nav className="flex h-[52px] items-center border-t border-b border-t-[#e4e4e4] border-b-[#d0d0d0] bg-linear-to-b from-white via-[#eee] to-[#e3e3e3] text-[#777] [text-shadow:0_1px_0_rgba(255,255,255,0.3)]">
        <div className="w-[672px] shrink-0 pt-px pl-[7px] text-lg leading-5 tracking-[0.015px] whitespace-nowrap">
          MapEs - MORTALITAT: Desarrollado por FISABIO en colaboración con la DGSP
        </div>
        <NavItem className="w-[195px] text-[#3399f3]" icon={<span className="pr-[2px]"><FaGlobeAmericas size={13} /></span>} label="Visualización de Datos" />
        <NavItem className="w-[127px]" icon={<LineChartIcon />} label="Tendencias" />
        <NavItem className="w-[151px]" icon={<span className="pr-[2px]"><UploadIcon /></span>} label="Carga de Datos" />
        <NavItem className="w-[244px]" icon={<span className="pr-px"><UsersIcon /></span>} label="Administración de usuarios" caret />
        <NavItem className="w-[93px]" icon={<span className="pr-[3px]"><FaQuestionCircle size={13} /></span>} label="Ayuda" />
        <NavItem className="w-[90px]" icon={<span className="pr-[2px]"><SignOutIcon /></span>} label="Cerrar" />
      </nav>

      <div className="flex items-start pt-5 pl-[6px]">
        <aside className={WELL + "h-[1000px] w-[446px] shrink-0 p-[19px]"}>
          <Title className="mt-[9px] text-center">CRITERIOS DE SELECCIÓN</Title>
          <hr className="mt-5 border-[#eaeaea]" />
          <Caption className="mt-[29px]">Seleccionar causas de muerte según:</Caption>
          <div className="mt-[15px] flex">
            <Radio label="Grandes grupos" className="w-[138px]" />
            <Radio label="102 causas INE" checked className="" />
          </div>
          <div className="mt-[35px] text-sm leading-5 font-bold text-[#666]">Causas de muerte:</div>
          <div className="mt-[5px] h-[34px] rounded border border-[#ccc] bg-white" />
          <Caption className="mt-[29px]">Años</Caption>
          <RangeSlider className="mt-[15px]" from="2,000" to="2,014" ticks={YEAR_TICKS} />
          <Caption className="mt-[27px]">Sexo</Caption>
          <div className="mt-[15px] flex">
            <Radio label="Mujer" className="w-[72px]" />
            <Radio label="Hombre" className="w-[88px]" />
            <Radio label="Ambos" checked className="" />
          </div>
          <Caption className="mt-6">Edad</Caption>
          <RangeSlider className="mt-[15px]" from="0-4" to=">85" ticks={AGE_TICKS} />
          <button className="mt-[17px] -ml-px flex h-10 w-[83px] items-center justify-center rounded-[2px] border-2 border-[#93b6f0] bg-[#dcdcdc] text-sm text-white [text-shadow:0_-1px_0_rgba(0,0,0,0.2)]">
            APLICAR
          </button>
          <hr className="mt-[19px] border-[#eaeaea]" />
          <section className={WELL + "mt-5 h-[400px] p-[19px]"}>
            <Title className="mt-[9px] text-center">COMPUTACIÓN INLA</Title>
            <hr className="mt-5 border-[#eaeaea]" />
            <Caption className="mt-[29px]">Modelo:</Caption>
            <Select value="BYM" className="mt-[15px]" />
          </section>
        </aside>

        <main className="ml-[15px] w-[1268px] shrink-0">
          <div className="mx-[15px] flex h-[42px] border-b border-[#ddd]">
            <div className="flex h-[42px] w-[97px] items-center rounded-t border border-b-0 border-[#ddd] bg-white pb-px pl-[18px] text-[#555]">
              <span className="mr-[7px]"><FileImageIcon /></span>
              Mapas
            </div>
            <div className="flex w-[132px] items-center pl-5 text-[#3399f3]">
              <span className="mr-[6px]"><TableIcon /></span>
              Indicadores
            </div>
            <div className="flex items-center pl-5 text-[#3399f3]">
              <span className="mr-[6px]"><TableIcon /></span>
              Tabla Observados
            </div>
          </div>
          <div className={WELL + "mt-5 h-[79px] pt-[28px] pl-[19px]"}>
            <Title>MAPA ESPACIAL DE MORTALIDAD DE LA COMUNITAT VALENCIANA</Title>
          </div>
          <hr className="mt-5 border-[#eee]" />

          <div className="mx-[15px] flex items-start">
            <div className="w-[816px] pt-10">
              <div className="flex">
                <Radio label="RME suavizada" checked className="w-[130px]" />
                <Radio label="Prob(Exceso de riesgo)" className="" />
              </div>
              <div className="mt-[15px] leading-5 text-[#a0a0a0]">Número de casos: 594195</div>
              <MapView />
              <button className="mt-5 flex h-[38px] w-[108px] items-center rounded border border-[#2e2f2f] bg-linear-to-b from-[#6d7070] via-[#474949] to-[#3d3f3f] pl-[11px] text-sm text-white">
                <span className="mr-[3px]"><DownloadIcon /></span>
                Descargar
              </button>
              <section className={WELL + "mt-5 h-[200px] px-[19px] pt-[27px]"}>
                <div className="leading-5 text-[#2d2d2d]">Departamentos:</div>
                <div className="mt-3 h-[34px] rounded border border-[#ccc] bg-white" />
              </section>
            </div>

            <section className={WELL + "mt-5 ml-[30px] h-[414px] w-[392px] p-[19px]"}>
              <Title className="mt-[9px] text-center">PERSONALIZACIÓN DEL MAPA</Title>
              <hr className="mt-5 border-[#eaeaea]" />
              <Caption className="mt-[29px]">Desagregación espacial:</Caption>
              <Select value="Municipios" className="mt-[15px]" />
              <Caption className="mt-[29px]">Escala de colores:</Caption>
              <Select value="Divergente 2 -> 'RdYlGn'" className="mt-[15px]" />
              <div className="mt-6 flex flex-col gap-[29px]">
                <Check label="Mostrar leyenda" checked />
                <Check label="Deseo seleccionar los puntos de corte" />
              </div>
            </section>
          </div>
        </main>
      </div>
    </div>
  );
}
